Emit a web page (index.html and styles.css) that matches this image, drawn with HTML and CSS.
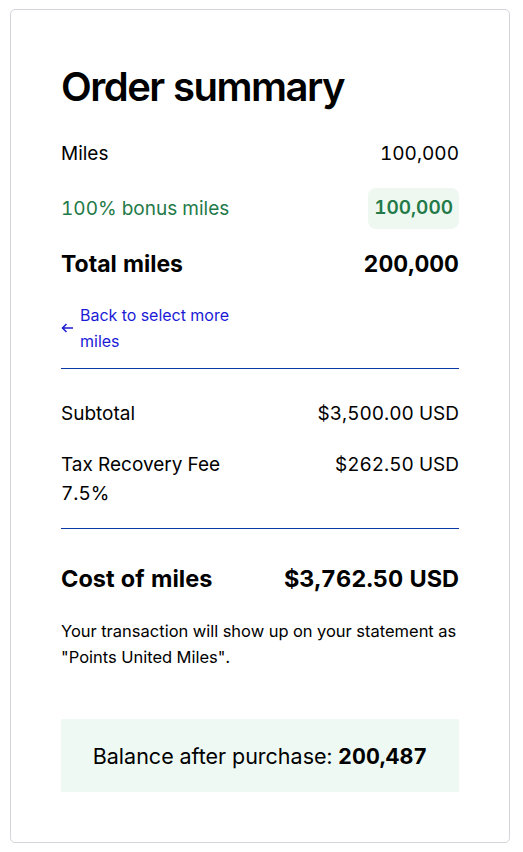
FILE: index.html
```html
<!DOCTYPE html>
<html lang="en">
<head>
    <meta charset="UTF-8">
    <meta name="viewport" content="width=device-width, initial-scale=1.0">
    <title>Order summary</title>
    <link rel="stylesheet" href="styles.css">
</head>
<body>
    <div class="card">
        <h1>Order summary</h1>

        <div class="row">
            <span>Miles</span>
            <span>100,000</span>
        </div>
        <div class="row bonus">
            <span>100% bonus miles</span>
            <span class="badge">100,000</span>
        </div>
        <div class="row total">
            <span>Total miles</span>
            <span>200,000</span>
        </div>

        <a class="back" href="#">
            <svg class="arrow" width="13" height="10" viewBox="0 0 13 10">
                <path d="M12 5H1.5M5.5 1L1.5 5L5.5 9" fill="none" stroke="currentColor" stroke-width="1.5"/>
            </svg>
            <span>Back to select more miles</span>
        </a>

        <hr class="divider">

        <div class="row price">
            <span>Subtotal</span>
            <span>$3,500.00 USD</span>
        </div>
        <div class="row price fee">
            <span class="label">Tax Recovery Fee 7.5%</span>
            <span>$262.50 USD</span>
        </div>

        <hr class="divider">

        <div class="row cost">
            <span>Cost of miles</span>
            <span>$3,762.50 USD</span>
        </div>

        <p class="note">Your transaction will show up on your statement as "Points United Miles".</p>

        <div class="balance">Balance after purchase: <strong>200,487</strong></div>
    </div>
</body>
</html>
```

FILE: styles.css
```css
body, html {
    margin: 0;
    background-color: #fff;
    font-family: Inter, "Liberation Sans", Arial, sans-serif;
    font-variant-numeric: tabular-nums;
    color: #000;
}

body {
    padding: 9px 0 0 10px;
}

.card {
    box-sizing: border-box;
    width: 500px;
    min-height: 834px;
    border: 1px solid #d4d4dc;
    border-radius: 5px;
    padding: 53px 50px 50px;
}

.card h1 {
    margin: 0 0 22px;
    font-size: 40px;
    line-height: 48px;
    font-weight: 600;
    letter-spacing: -1.5px;
}

.row {
    display: flex;
    justify-content: space-between;
    align-items: center;
    min-height: 41px;
    font-size: 19px;
    line-height: 26px;
}

.row + .row {
    margin-top: 14px;
}

.bonus {
    color: #237a48;
}

.badge {
    background-color: #eef8f1;
    border-radius: 8px;
    padding: 7px 6px 8px;
    font-weight: 600;
}

.total {
    font-size: 23px;
    font-weight: 700;
}

.back {
    display: flex;
    align-items: center;
    gap: 6px;
    margin-top: 18px;
    color: #1b1bd6;
    text-decoration: none;
    font-size: 16px;
    line-height: 26px;
}

.back span {
    max-width: 170px;
}

.divider {
    border: none;
    border-top: 1px solid #0a3aa8;
    margin: 14px 0 0;
}

.price {
    align-items: flex-start;
    min-height: 0;
    line-height: 29px;
}

.divider + .price {
    margin-top: 30px;
}

.row.fee {
    margin-top: 22px;
}

.fee .label {
    max-width: 180px;
}

.fee + .divider {
    margin-top: 20px;
}

.cost {
    margin-top: 32px;
    font-size: 23.5px;
    font-weight: 700;
    line-height: 35px;
    min-height: 0;
}

.note {
    margin: 22px 0 0;
    font-size: 16.5px;
    line-height: 26px;
}

.balance {
    margin-top: 49px;
    background-color: #eff9f3;
    padding: 21px 0 20px;
    text-align: center;
    font-size: 21.5px;
    line-height: 32px;
}

.balance strong {
    font-weight: 700;
}
```
